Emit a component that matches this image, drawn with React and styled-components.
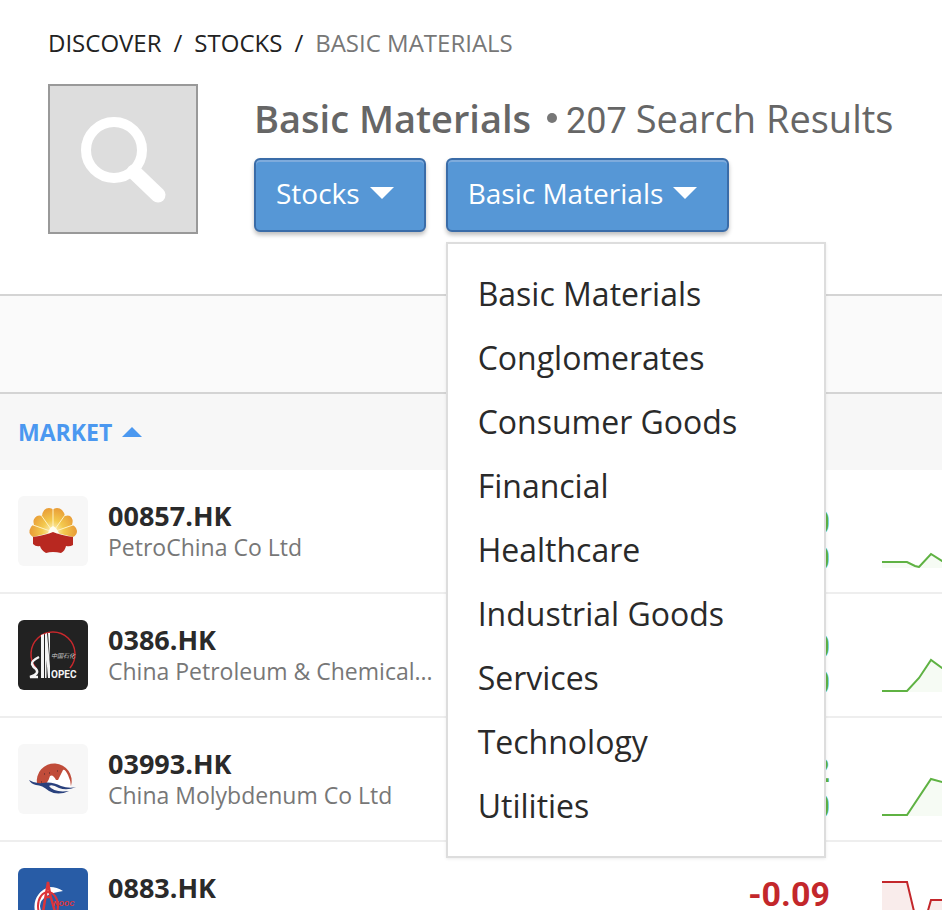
import React from 'react';
import styled, { createGlobalStyle } from 'styled-components';

const GlobalStyle = createGlobalStyle`
    * {
        box-sizing: border-box;
    }
    html, body {
        margin: 0;
        height: 100%;
        overflow: hidden;
        background: #fff;
        color: #222;
        font-family: "Open Sans", "Noto Sans", sans-serif;
    }
    button {
        font-family: inherit;
    }
`

const Header = styled.header`
    padding: 24px 24px 60px 48px;
`

const Breadcrumb = styled.nav`
    display: flex;
    gap: 12px;
    margin-bottom: 22px;
    font-size: 24px;
    line-height: 38px;
    text-transform: uppercase;
    white-space: nowrap;
`

const Crumb = styled.a`
    color: ${props => props.$current ? '#777' : '#222'};
    text-decoration: none;
`

const Hero = styled.div`
    display: flex;
    gap: 56px;
`

const SearchTile = styled.div`
    flex: none;
    width: 150px;
    height: 150px;
    border: 2px solid #999;
    background: #ddd;
`

const Title = styled.h1`
    display: flex;
    align-items: baseline;
    gap: 16px;
    height: 70px;
    margin: 0 0 4px;
    color: #666;
    font-size: 38px;
    font-weight: 600;
    line-height: 68px;
    white-space: nowrap;
`

const Results = styled.span`
    display: flex;
    align-items: baseline;
    gap: 9px;
    font-weight: 400;
`

const Dot = styled.span`
    align-self: center;
    width: 10px;
    height: 10px;
    border-radius: 50%;
    background: #777;
`

const Count = styled.span`
    font-family: Roboto, sans-serif;
    font-size: 36px;
    line-height: 36px;
`

const Filters = styled.div`
    display: flex;
    gap: 20px;
`

const Dropdown = styled.div`
    position: relative;
`

const DropdownButton = styled.button`
    display: flex;
    align-items: center;
    gap: 10px;
    height: 74px;
    padding: 0 30px 4px 20px;
    border: 2px solid #3a6ca8;
    border-radius: 6px;
    background: #5697d6;
    box-shadow: 0 3px 4px rgba(0, 0, 0, 0.25), inset 0 2px 0 #7eabdc;
    color: #fff;
    font-size: 28px;
    line-height: 38px;
    white-space: nowrap;
`

const Menu = styled.ul`
    position: absolute;
    z-index: 1;
    top: calc(100% + 10px);
    left: 0;
    width: 380px;
    margin: 0;
    padding: 18px 0;
    border: 2px solid #ddd;
    background: #fff;
    box-shadow: 0 1px 3px rgba(0, 0, 0, 0.08);
    list-style: none;
`

const MenuLink = styled.a`
    display: block;
    padding: 0 30px;
    color: #2a2a2a;
    font-size: 32px;
    line-height: 64px;
    text-decoration: none;
`

const Band = styled.div`
    height: 100px;
    border: solid #d4d4d4;
    border-width: 2px 0;
    background: #fafafa;
`

const Table = styled.table`
    width: 100%;
    table-layout: fixed;
    border-spacing: 0;
`

const HeadCell = styled.th`
    width: ${props => props.$width};
    height: 76px;
    padding: 0 18px;
    background: #f7f7f7;
    text-align: left;
`

const SortButton = styled.button`
    display: flex;
    align-items: center;
    gap: 10px;
    padding: 0;
    border: 0;
    background: none;
    color: #4b98f0;
    font-size: 23px;
    font-weight: 700;
    line-height: 32px;
`

const Cell = styled.td`
    height: 124px;
    padding: 26px 0 0;
    border-bottom: 2px solid #eee;
    vertical-align: top;
    svg {
        display: block;
    }
`

const MarketCell = styled(Cell)`
    padding: 26px 6px 0 18px;
`

const Market = styled.div`
    display: flex;
    gap: 20px;
`

const Logo = styled.div`
    flex: none;
    width: 70px;
    height: 70px;
    border-radius: 6px;
    overflow: hidden;
    background: ${props => props.$color};
`

const Names = styled.div`
    min-width: 0;
    padding-top: 4px;
`

const Symbol = styled.div`
    color: #2a2a2a;
    font-size: 27px;
    font-weight: 700;
    line-height: 32px;
`

const Company = styled.div`
    overflow: hidden;
    color: #777;
    font-size: 23px;
    line-height: 30px;
    text-overflow: ellipsis;
    white-space: nowrap;
`

const ChangeCell = styled(Cell)`
    padding: 34px 0 0;
    color: ${props => props.$down ? '#c3272b' : '#5fb243'};
    font-family: Roboto, sans-serif;
    font-size: 34px;
    font-weight: 700;
    line-height: 36px;
    text-align: right;
`

const ChartCell = styled(Cell)`
    padding-left: 52px;
    overflow: hidden;
`

const sectors = [
    'Basic Materials',
    'Conglomerates',
    'Consumer Goods',
    'Financial',
    'Healthcare',
    'Industrial Goods',
    'Services',
    'Technology',
    'Utilities',
];

const PetroChinaLogo = () => (
    <svg width="70" height="70" viewBox="0 0 70 70" aria-hidden="true">
        <defs>
            <radialGradient id="petals" gradientUnits="userSpaceOnUse" cx="35" cy="35" r="24">
                <stop offset="0" stopColor="#fff6c8" />
                <stop offset="0.45" stopColor="#f3c94e" />
                <stop offset="1" stopColor="#e89a35" />
            </radialGradient>
        </defs>
        <path d="M35 36 L15 41 Q9 37 13 31 Q14 29 16 29 Q14 23 19 20 Q21 19 24 20 Q25 12 31 12 Q34 12 35 14 Q36 12 39 12 Q45 12 47 20 Q50 19 52 20 Q56 23 54 29 Q58 30 59 35 Q59 39 55 41 Z" fill="url(#petals)" />
        <path d="M35 36 L15 29 M35 36 L23 19 M35 36 L35 14 M35 36 L47 19 M35 36 L55 29" stroke="#fff3c4" strokeWidth="1" fill="none" />
        <path d="M30 37 L32 32 L35 30 L38 32 L41 37 Z" fill="#fffdf0" />
        <path d="M15 41 Q28 39 35 36 Q42 39 55 41 L55 49 Q52 51 48 50 Q47 55 43 57 Q39 56 35 56 Q31 56 28 57 Q23 54 22 50 Q18 51 15 48 Z" fill="#b82820" />
    </svg>
);

const SinopecLogo = () => (
    <svg width="70" height="70" viewBox="0 0 70 70" aria-hidden="true">
        <path d="M18 48 A22 22 0 1 1 52 48" fill="none" stroke="#c8282c" strokeWidth="1.5" />
        <path d="M23 15 L26 14 L26 58 L23 58 Z M27 14 L29 13 L32 46 L32 58 L30 58 L28.500 40 L28.500 58 L27 58 Z M30 13 L32 13 L32 40 Z" fill="#f4f4f4" />
        <path d="M21 37 Q13 41 14 44 Q15 47 18 49 Q22 54 12 57 L20 57" fill="none" stroke="#f4f4f4" strokeWidth="2.500" />
        <text x="33" y="38" fill="#ccc" fontFamily="Noto Sans CJK SC, sans-serif" fontSize="6" fontStyle="italic">中国石化</text>
        <text x="33" y="58" fill="#f4f4f4" fontFamily="Roboto, sans-serif" fontSize="10" fontWeight="700">OPEC</text>
    </svg>
);

const MolybdenumLogo = () => (
    <svg width="70" height="70" viewBox="0 0 70 70" aria-hidden="true">
        <path d="M19 40 A17.500 17.500 0 1 1 53 42 L41 41 Z" fill="#c04c3a" />
        <path d="M28 40 Q31 36 32 32 Q35 30 38 36 L40 36 L45 26 Q47 25 50 31 Q53 37 53 43 L41 43 Z" fill="#fff" />
        <path d="M11 36 Q17 40 24 39 Q34 37 43 42 Q51 45 58 43 Q49 47 41 44 Q34 40 31 42 Q36 49 51 47 Q40 52 31 47 Q24 41 18 41 Q13 40 11 36 Z" fill="#29417d" />
        <path d="M26 30h1 M31 29h1 M39 27h1 M23 38h1" stroke="#46252b" strokeWidth="1" />
    </svg>
);

const CnoocLogo = () => (
    <svg width="70" height="70" viewBox="0 0 70 70" aria-hidden="true">
        <path d="M45 23 Q39 19 32 19 A20 20 0 0 0 32 58 L38 56 Q24 54 22 38 Q23 26 45 23 Z" fill="#fff" />
        <ellipse cx="30" cy="38" rx="10" ry="14" fill="none" stroke="#dc3439" strokeWidth="2" />
        <path d="M25 44 L28 26 L30 14 L32 26 L37 44 M28 29 H33" fill="none" stroke="#dc3439" strokeWidth="2.500" />
        <text x="35" y="38" fill="#dc3439" fontFamily="Roboto, sans-serif" fontSize="8" fontStyle="italic" fontWeight="700">NOOC</text>
    </svg>
);

const stocks = [
    {
        symbol: '00857.HK',
        company: 'PetroChina Co Ltd',
        logo: <PetroChinaLogo />,
        color: '#f7f7f7',
        change: '0.10',
        percent: '1.60',
        points: '0,66 25,66 33,70 37,71 49,58 60,65 84,66',
    },
    {
        symbol: '0386.HK',
        company: 'China Petroleum & Chemical...',
        logo: <SinopecLogo />,
        color: '#222',
        change: '0.10',
        percent: '1.60',
        points: '0,71 25,71 37,58 49,40 60,48 84,44',
    },
    {
        symbol: '03993.HK',
        company: 'China Molybdenum Co Ltd',
        logo: <MolybdenumLogo />,
        color: '#f7f7f7',
        change: '0.02',
        percent: '1.60',
        points: '0,71 25,71 49,35 60,38 84,30',
    },
    {
        symbol: '0883.HK',
        company: 'CNOOC Ltd',
        logo: <CnoocLogo />,
        color: '#285ca6',
        change: '-0.09',
        percent: '-0.90',
        down: true,
        points: '0,14 25,14 36,60 41,60 49,32 60,32 84,40',
    },
];

const Chart = ({ points, down }) => (
    <svg width="84" height="72" viewBox="0 0 84 72" aria-hidden="true">
        <polygon points={`0,72 ${points} 84,72`} fill={down ? '#f9eceb' : '#f6fbf4'} />
        <polyline points={points} fill="none" stroke={down ? '#c3272b' : '#5fb243'} strokeWidth="2" />
    </svg>
);

const Caret = () => (
    <svg width="24" height="12" viewBox="0 0 24 12" aria-hidden="true">
        <path d="M0 0 H24 L12 12 Z" fill="currentColor" />
    </svg>
);

const StockRow = ({ stock }) => (
    <tr>
        <MarketCell>
            <Market>
                <Logo $color={stock.color}>{stock.logo}</Logo>
                <Names>
                    <Symbol>{stock.symbol}</Symbol>
                    <Company>{stock.company}</Company>
                </Names>
            </Market>
        </MarketCell>
        <ChangeCell $down={stock.down}>
            <div>{stock.change}</div>
            <div>{stock.percent}</div>
        </ChangeCell>
        <ChartCell>
            <Chart points={stock.points} down={stock.down} />
        </ChartCell>
    </tr>
);

const App = () => {
    return (
    <>
        <GlobalStyle />
        <Header>
            <Breadcrumb aria-label="Breadcrumb">
                <Crumb href="#discover">Discover</Crumb>
                <span>/</span>
                <Crumb href="#stocks">Stocks</Crumb>
                <span>/</span>
                <Crumb as="span" $current>Basic Materials</Crumb>
            </Breadcrumb>
            <Hero>
                <SearchTile>
                    <svg width="146" height="146" viewBox="0 0 146 146" aria-hidden="true">
                        <circle cx="64" cy="64" r="28" fill="none" stroke="#fff" strokeWidth="10" />
                        <path d="M84 86 L108 109" stroke="#fff" strokeWidth="15" strokeLinecap="round" />
                    </svg>
                </SearchTile>
                <div>
                    <Title>
                        Basic Materials
                        <Results><Dot /><Count>207</Count> Search Results</Results>
                    </Title>
                    <Filters>
                        <Dropdown>
                            <DropdownButton type="button">Stocks <Caret /></DropdownButton>
                        </Dropdown>
                        <Dropdown>
                            <DropdownButton type="button" aria-expanded="true">Basic Materials <Caret /></DropdownButton>
                            <Menu>
                                {sectors.map(sector => (
                                    <li key={sector}>
                                        <MenuLink href="#sector">{sector}</MenuLink>
                                    </li>
                                ))}
                            </Menu>
                        </Dropdown>
                    </Filters>
                </div>
            </Hero>
        </Header>
        <Band />
        <Table>
            <thead>
                <tr>
                    <HeadCell $width="47.3%">
                        <SortButton type="button">
                            MARKET
                            <svg width="20" height="10" viewBox="0 0 20 10" aria-hidden="true">
                                <path d="M0 10 L10 0 L20 10 Z" fill="currentColor" />
                            </svg>
                        </SortButton>
                    </HeadCell>
                    <HeadCell />
                    <HeadCell $width="112px" />
                </tr>
            </thead>
            <tbody>
                {stocks.map(stock => <StockRow key={stock.symbol} stock={stock} />)}
            </tbody>
        </Table>
    </>
    )
};

export default App;
